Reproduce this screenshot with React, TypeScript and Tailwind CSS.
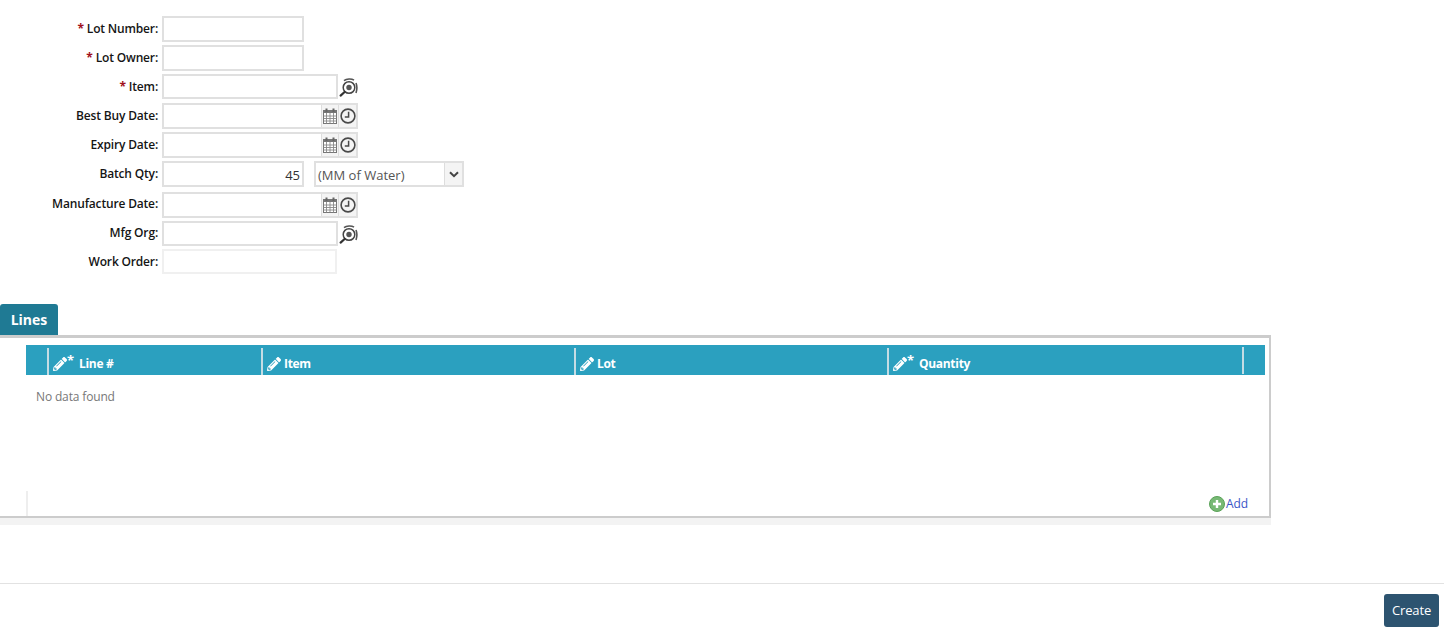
import { FaPencilAlt } from "react-icons/fa";

const font = { fontFamily: '"Open Sans", sans-serif' };

function LookupIcon() {
  return (
    <svg width="19" height="20" viewBox="0 0 19 20" className="ml-[1px] shrink-0" fill="none">
      <circle cx="10" cy="10.5" r="5.8" stroke="#444" strokeWidth="1.5" />
      <circle cx="10" cy="10.5" r="2.7" fill="#555" />
      <path d="M5 3.6C7.5 1.6 12.5 1.4 15 3.2" stroke="#555" strokeWidth="1.6" />
      <path d="M17 6C18 8.5 18 13 17 16" stroke="#555" strokeWidth="1.6" />
      <path d="M5.6 15L1.6 18.6" stroke="#333" strokeWidth="2.2" strokeLinecap="round" />
    </svg>
  );
}

function CalendarIcon() {
  return (
    <svg width="14" height="16" viewBox="0 0 14 16" fill="none">
      <rect x="0.5" y="2.5" width="13" height="13" fill="#fff" stroke="#777" />
      <rect x="0.5" y="2.5" width="13" height="2.5" fill="#777" />
      <rect x="2.5" y="0.5" width="2" height="3.5" fill="#666" />
      <rect x="9.5" y="0.5" width="2" height="3.5" fill="#666" />
      <path d="M0.5 8H13.5M0.5 10.5H13.5M0.5 13H13.5M3.5 5V15.5M7 5V15.5M10.5 5V15.5" stroke="#888" strokeWidth="0.9" />
    </svg>
  );
}

function ClockIcon() {
  return (
    <svg width="16" height="16" viewBox="0 0 16 16" fill="none">
      <circle cx="8" cy="8" r="6.9" stroke="#4a4a4a" strokeWidth="1.6" />
      <path d="M8.6 3.8V9H4.8" stroke="#4a4a4a" strokeWidth="1.5" />
    </svg>
  );
}

function Label({ text, required, up }: { text: string; required?: boolean; up?: boolean }) {
  return (
    <div
      className={`w-[158px] shrink-0 whitespace-nowrap text-right text-[12px] font-semibold tracking-[-0.17px] text-[#151515] ${
        up ? "pb-[2px]" : ""
      }`}
    >
      {required && <span className="mr-[3px] font-bold text-[#a01020]">*</span>}
      {text}:
    </div>
  );
}

function Input({ w, h = "h-[26px]", light, value }: { w: string; h?: string; light?: boolean; value?: string }) {
  return (
    <div
      className={`${w} ${h} ml-[4px] shrink-0 border-2 bg-white px-[2px] text-right text-[13px] leading-[24px] text-[#333] ${
        light ? "border-[#f0f0f0]" : "border-[#e0e0e0]"
      }`}
    >
      {value}
    </div>
  );
}

function DateField() {
  return (
    <div className="ml-[4px] flex h-[26px] w-[196px] shrink-0 border-2 border-[#e0e0e0] bg-white">
      <div className="flex-1" />
      <div className="flex w-[17px] items-center justify-center border-l border-[#dddddd] bg-[#f4f4f4]">
        <CalendarIcon />
      </div>
      <div className="flex w-[18px] items-center justify-center border-l border-[#dddddd] bg-[#f4f4f4]">
        <ClockIcon />
      </div>
    </div>
  );
}

function Row({ className, children }: { className: string; children: React.ReactNode }) {
  return <div className={`flex items-center ${className}`}>{children}</div>;
}

function Column({ w, text, star }: { w: string; text: string; star?: boolean }) {
  return (
    <div className={`${w} flex h-full items-center pt-[2px]`}>
      <div className="flex h-[27px] w-full items-center border-l-2 border-[#c4dce4] pl-[3px] pt-[5px]">
        <span className="flex w-[15px] shrink-0 justify-center">
          <FaPencilAlt className="text-white" size={14} />
        </span>
        {star ? (
          <span className="mb-[6px] w-[9px] shrink-0 text-[13px] font-bold leading-none text-white">*</span>
        ) : null}
        <span className="ml-[3px] text-[12px] font-bold tracking-[-0.3px] text-white">{text}</span>
      </div>
    </div>
  );
}

export default function App() {
  return (
    <div className="relative flex h-[633px] w-[1444px] flex-col overflow-hidden bg-white" style={font}>
      <div className="flex flex-col pt-[16px]">
        <Row className="h-[26px]">
          <Label text="Lot Number" required />
          <Input w="w-[142px]" />
        </Row>
        <Row className="mt-[3px] h-[26px]">
          <Label text="Lot Owner" required />
          <Input w="w-[142px]" />
        </Row>
        <Row className="mt-[3px] h-[25px]">
          <Label text="Item" required />
          <Input w="w-[176px]" h="h-[25px]" />
          <LookupIcon />
        </Row>
        <Row className="mt-[4px] h-[26px]">
          <Label text="Best Buy Date" />
          <DateField />
        </Row>
        <Row className="mt-[3px] h-[26px]">
          <Label text="Expiry Date" />
          <DateField />
        </Row>
        <Row className="mt-[3px] h-[26px]">
          <Label text="Batch Qty" />
          <Input w="w-[142px]" value="45" />
          <div className="ml-[10px] flex h-[26px] w-[150px] border-2 border-[#e0e0e0] bg-white text-[13px] text-[#555]">
            <div className="flex-1 pl-[2px] leading-[24px]">(MM of Water)</div>
            <div className="flex w-[18px] items-center justify-center border-l border-[#dddddd] bg-[#f4f4f4]">
              <svg width="10" height="7" viewBox="0 0 10 7" fill="none">
                <path d="M1 1.2L5 5.2L9 1.2" stroke="#444" strokeWidth="2" />
              </svg>
            </div>
          </div>
        </Row>
        <Row className="mt-[5px] h-[26px]">
          <Label text="Manufacture Date" up />
          <DateField />
        </Row>
        <Row className="mt-[3px] h-[25px]">
          <Label text="Mfg Org" up />
          <Input w="w-[176px]" h="h-[25px]" />
          <LookupIcon />
        </Row>
        <Row className="mt-[3px] h-[25px]">
          <Label text="Work Order" />
          <Input w="w-[175px]" h="h-[25px]" light />
        </Row>
      </div>

      <div className="mt-[30px] flex h-[31px] w-[58px] items-center justify-center rounded-t-[3px] bg-[#1f7a94] text-[14px] font-bold text-white">
        Lines
      </div>

      <div className="flex h-[183px] w-[1271px] flex-col border-t-[3px] border-r-2 border-b-2 border-[#cccccc] bg-white">
        <div className="ml-[26px] mr-[4px] mt-[7px] flex h-[30px] shrink-0 bg-[#2ba0bf]">
          <div className="w-[21px]" />
          <Column w="w-[214px]" text="Line #" star />
          <Column w="w-[313px]" text="Item" />
          <Column w="w-[313px]" text="Lot" />
          <Column w="w-[355px]" text="Quantity" star />
          <div className="flex-1 pt-[2px]">
            <div className="h-[27px] border-l-2 border-[#c4dce4]" />
          </div>
        </div>
        <div className="ml-[36px] mt-[13px] text-[12px] tracking-[-0.15px] text-[#777777]">No data found</div>
        <div className="ml-[26px] mt-auto flex h-[25px] items-center justify-end border-l-2 border-[#eeeeee] pr-[21px] pt-[1px]">
          <svg width="16" height="16" viewBox="0 0 16 16" className="mr-[1px]">
            <circle cx="8" cy="8" r="7.5" fill="#78b975" stroke="#5aa258" />
            <path d="M8 4V12M4 8H12" stroke="#fff" strokeWidth="2.4" />
          </svg>
          <span className="text-[12px] tracking-[-0.1px] text-[#3a55c8]">Add</span>
        </div>
      </div>
      <div className="h-[7px] w-[1271px] bg-[#f3f3f3]" />

      <div className="mt-[58px] flex flex-1 items-start justify-end border-t border-[#e2e2e2] pr-[5px] pt-[10px]">
        <button className="h-[33px] w-[55px] rounded-[3px] bg-[#2d5470] text-[13px] tracking-[-0.15px] text-white">Create</button>
      </div>
    </div>
  );
}
